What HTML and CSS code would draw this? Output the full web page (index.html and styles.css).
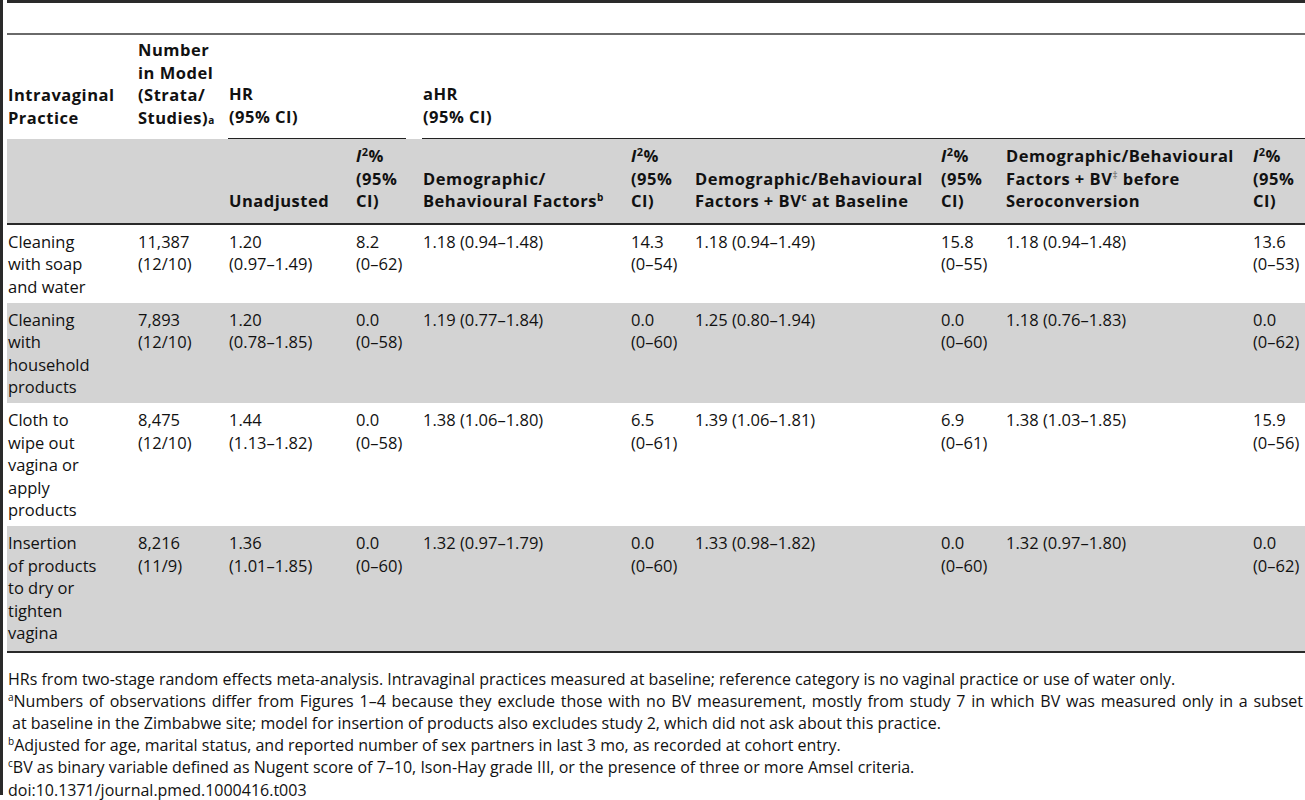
FILE: index.html
```html
<!DOCTYPE html>
<html lang="en">
<head>
    <meta charset="UTF-8">
    <meta name="viewport" content="width=device-width, initial-scale=1.0">
    <title>Table 3 - Intravaginal practices and HIV acquisition</title>
    <link rel="stylesheet" href="styles.css">
</head>
<body>
    <div class="frame">
        <div class="sheet">
            <table class="results">
                <colgroup>
                    <col class="c-practice">
                    <col class="c-number">
                    <col class="c-hr">
                    <col class="c-i2">
                    <col class="c-demo">
                    <col class="c-i2b">
                    <col class="c-base">
                    <col class="c-i2c">
                    <col class="c-sero">
                    <col class="c-i2d">
                </colgroup>
                <thead>
                    <tr class="head-top">
                        <th>Intravaginal<br>Practice</th>
                        <th>Number<br>in Model<br>(Strata/<br>Studies)<span class="fn-low">a</span></th>
                        <th colspan="2" class="group"><div class="group-label">HR<br>(95% CI)</div></th>
                        <th colspan="6" class="group"><div class="group-label wide">aHR<br>(95% CI)</div></th>
                    </tr>
                    <tr class="head-sub shaded">
                        <th></th>
                        <th></th>
                        <th>Unadjusted</th>
                        <th><i>I</i><sup class="sq">2</sup>%<br>(95%<br>CI)</th>
                        <th>Demographic/<br>Behavioural Factors<sup>b</sup></th>
                        <th><i>I</i><sup class="sq">2</sup>%<br>(95%<br>CI)</th>
                        <th>Demographic/Behavioural<br>Factors + BV<sup>c</sup> at Baseline</th>
                        <th><i>I</i><sup class="sq">2</sup>%<br>(95%<br>CI)</th>
                        <th>Demographic/Behavioural<br>Factors + BV<sup class="dag">&#8225;</sup> before<br>Seroconversion</th>
                        <th><i>I</i><sup class="sq">2</sup>%<br>(95%<br>CI)</th>
                    </tr>
                </thead>
                <tbody>
                    <tr>
                        <td>Cleaning<br>with soap<br>and water</td>
                        <td>11,387<br>(12/10)</td>
                        <td>1.20<br>(0.97–1.49)</td>
                        <td>8.2<br>(0–62)</td>
                        <td>1.18 (0.94–1.48)</td>
                        <td>14.3<br>(0–54)</td>
                        <td>1.18 (0.94–1.49)</td>
                        <td>15.8<br>(0–55)</td>
                        <td>1.18 (0.94–1.48)</td>
                        <td>13.6<br>(0–53)</td>
                    </tr>
                    <tr class="shaded">
                        <td>Cleaning<br>with<br>household<br>products</td>
                        <td>7,893<br>(12/10)</td>
                        <td>1.20<br>(0.78–1.85)</td>
                        <td>0.0<br>(0–58)</td>
                        <td>1.19 (0.77–1.84)</td>
                        <td>0.0<br>(0–60)</td>
                        <td>1.25 (0.80–1.94)</td>
                        <td>0.0<br>(0–60)</td>
                        <td>1.18 (0.76–1.83)</td>
                        <td>0.0<br>(0–62)</td>
                    </tr>
                    <tr>
                        <td>Cloth to<br>wipe out<br>vagina or<br>apply<br>products</td>
                        <td>8,475<br>(12/10)</td>
                        <td>1.44<br>(1.13–1.82)</td>
                        <td>0.0<br>(0–58)</td>
                        <td>1.38 (1.06–1.80)</td>
                        <td>6.5<br>(0–61)</td>
                        <td>1.39 (1.06–1.81)</td>
                        <td>6.9<br>(0–61)</td>
                        <td>1.38 (1.03–1.85)</td>
                        <td>15.9<br>(0–56)</td>
                    </tr>
                    <tr class="shaded last">
                        <td>Insertion<br>of products<br>to dry or<br>tighten<br>vagina</td>
                        <td>8,216<br>(11/9)</td>
                        <td>1.36<br>(1.01–1.85)</td>
                        <td>0.0<br>(0–60)</td>
                        <td>1.32 (0.97–1.79)</td>
                        <td>0.0<br>(0–60)</td>
                        <td>1.33 (0.98–1.82)</td>
                        <td>0.0<br>(0–60)</td>
                        <td>1.32 (0.97–1.80)</td>
                        <td>0.0<br>(0–62)</td>
                    </tr>
                </tbody>
            </table>

            <div class="notes">
                <p>HRs from two-stage random effects meta-analysis. Intravaginal practices measured at baseline; reference category is no vaginal practice or use of water only.</p>
                <p><span class="full"><sup>a</sup>Numbers of observations differ from Figures 1–4 because they exclude those with no BV measurement, mostly from study 7 in which BV was measured only in a subset</span><span class="cont">at baseline in the Zimbabwe site; model for insertion of products also excludes study 2, which did not ask about this practice.</span></p>
                <p><sup>b</sup>Adjusted for age, marital status, and reported number of sex partners in last 3 mo, as recorded at cohort entry.</p>
                <p><sup>c</sup>BV as binary variable defined as Nugent score of 7–10, Ison-Hay grade III, or the presence of three or more Amsel criteria.</p>
                <p>doi:10.1371/journal.pmed.1000416.t003</p>
            </div>
        </div>
    </div>
</body>
</html>
```

FILE: styles.css
```css
* {
    margin: 0;
    padding: 0;
    box-sizing: border-box;
}

body {
    font-family: "Open Sans", "Noto Sans", sans-serif;
    color: #111;
    background: white;
    padding-bottom: 5px;
}

.frame {
    border-left: 3px solid #2a2a2a;
    padding-left: 4px;
    height: 795px;
}

.sheet {
    border-top: 3px solid #2a2a2a;
    padding-top: 30px;
}

/* table */
.results {
    width: 100%;
    table-layout: fixed;
    border-collapse: separate;
    border-spacing: 0;
    border-top: 2px solid #6a6a6a;
    font-size: 16.5px;
    line-height: 22.5px;
}

.c-practice { width: 130px; }
.c-number { width: 91px; }
.c-hr { width: 127px; }
.c-i2 { width: 67px; }
.c-demo { width: 208px; }
.c-i2b { width: 64px; }
.c-base { width: 246px; }
.c-i2c { width: 65px; }
.c-sero { width: 247px; }
.c-i2d { width: 53px; }

.results th,
.results td {
    text-align: left;
    padding: 6px 0 4.5px 1px;
    white-space: nowrap;
}

.results th {
    font-weight: 700;
    letter-spacing: 0.5px;
    vertical-align: bottom;
}

.results td {
    font-weight: 400;
    vertical-align: top;
}

.shaded {
    background: #d3d3d3;
}

.head-top th {
    padding-top: 4px;
    padding-bottom: 10px;
}

.head-top th.group {
    padding-bottom: 0;
}

.group-label {
    border-bottom: 1px solid #222;
    padding-bottom: 10px;
    margin-right: 16px;
    margin-left: -1px;
    padding-left: 1px;
}

.group-label.wide {
    margin-right: 0;
}

.head-sub th {
    padding-bottom: 10px;
    border-bottom: 2px solid #2a2a2a;
}

.last td {
    padding-bottom: 6px;
    border-bottom: 2px solid #2a2a2a;
}

.results i {
    font-style: italic;
}

.results sup {
    font-size: 10px;
    line-height: 0;
    vertical-align: 6px;
}

.results sup.sq {
    font-size: 11px;
    font-weight: 700;
    vertical-align: 6px;
}

.results sup.dag {
    font-weight: 400;
    color: #666;
}

.fn-low {
    font-size: 10px;
    line-height: 0;
}

/* footnotes */
.notes {
    margin-top: 15px;
    font-size: 16px;
    font-stretch: 95%;
    line-height: 22.2px;
    padding-left: 1px;
}

.notes sup {
    font-size: 10px;
    line-height: 0;
    vertical-align: 6px;
}

.notes .full {
    display: block;
    text-align: justify;
    text-align-last: justify;
    padding-right: 2px;
}

.notes .cont {
    display: block;
    padding-left: 4px;
}
```
